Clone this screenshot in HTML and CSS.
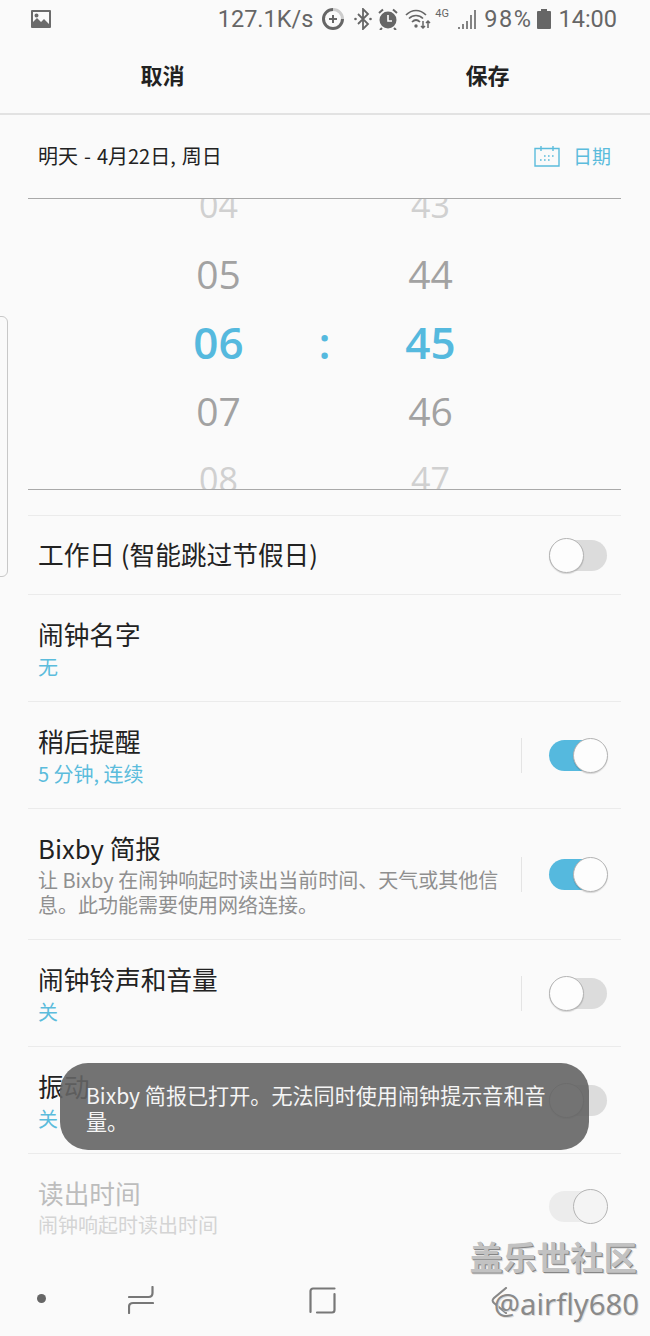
FILE: index.html

```html
<!DOCTYPE html>
<html lang="zh-CN">
<head>
    <meta charset="UTF-8">
    <title>闹钟</title>
    <link rel="stylesheet" href="styles.css">
</head>
<body>
<div class="screen">
    <div class="status">
        <svg class="ic-image" width="20" height="18" viewBox="0 0 20 18"><path fill="#6b6b6b" fill-rule="evenodd" d="M1 0h18a1 1 0 0 1 1 1v16a1 1 0 0 1-1 1H1a1 1 0 0 1-1-1V1a1 1 0 0 1 1-1zM2 2v10l4-4 4 4 3-3 5 5V2zM5.500 3.500a2 2 0 1 1 0 4 2 2 0 0 1 0-4z"/></svg>
        <div class="status-right">
            <span class="speed">127.1K/s</span>
            <svg class="ic-data" width="24" height="24" viewBox="0 0 24 24"><path fill="none" stroke="#ccc" stroke-width="3" d="M12 2.500a9.500 9.500 0 0 1 9.500 9.500"/><path fill="none" stroke="#666" stroke-width="3" d="M21.500 12A9.500 9.500 0 1 1 12 2.500"/><path fill="none" stroke="#666" stroke-width="2" d="M12 8v8M8 12h8"/></svg>
            <svg class="ic-bt" width="18" height="22" viewBox="0 0 18 22"><path fill="none" stroke="#666" stroke-width="1.800" d="M4 6l10 10-5 5V1l5 5L4 16"/><circle cx="1.500" cy="11" r="1.300" fill="#666"/><circle cx="16.500" cy="11" r="1.300" fill="#666"/></svg>
            <svg class="ic-alarm" width="20" height="22" viewBox="0 0 20 22"><circle cx="10" cy="12" r="8.500" fill="#666"/><path fill="none" stroke="#fff" stroke-width="1.600" d="M10 7v6h4"/><path fill="none" stroke="#666" stroke-width="2" d="M1 5l4-3.500M19 5l-4-3.500M4 20l-2 2M16 20l2 2"/></svg>
            <svg class="ic-wifi" width="26" height="22" viewBox="0 0 26 22"><path fill="none" stroke="#666" stroke-width="1.700" d="M1 7c6-6 14-6 20 0M4 10.500c4-4 10-4 14 0M7 14c2.500-2.500 5.500-2.500 8 0"/><circle cx="11" cy="18" r="1.700" fill="#666"/><path fill="none" stroke="#666" stroke-width="1.500" d="M18 13v7M16 18l2 2 2-2M23 20v-7M21 15l2-2 2 2"/></svg>
            <span class="net">4G</span>
            <svg class="ic-signal" width="20" height="20" viewBox="0 0 20 20"><path fill="none" stroke="#666" stroke-width="1.600" d="M1 20v-2M5 20v-5M9 20v-8M13 20V6M17 20V1"/></svg>
            <span class="batt-text">98%</span>
            <svg class="ic-batt" width="14" height="20" viewBox="0 0 14 20"><path fill="#666" d="M4 0h6v2h3a1 1 0 0 1 1 1v16a1 1 0 0 1-1 1H1a1 1 0 0 1-1-1V3a1 1 0 0 1 1-1h3z"/></svg>
            <span class="clock">14:00</span>
        </div>
    </div>

    <div class="actions">
        <div class="action">取消</div>
        <div class="action">保存</div>
    </div>

    <div class="wrap">
        <div class="date-row">
            <span class="date-text">明天 - 4月22日, 周日</span>
            <span class="date-btn">
                <svg width="26" height="22" viewBox="0 0 26 22"><path fill="none" stroke="#5bbcdc" stroke-width="1.400" d="M1 3.500h24v17.500H1zM7 1v5M19 1v5"/><path fill="none" stroke="#5bbcdc" stroke-width="1.600" stroke-dasharray="1.600 2.400" d="M10 11h10M6 15h12"/></svg>
                日期
            </span>
        </div>

        <div class="picker">
            <div class="picker-col">
                <div class="num fade">04</div>
                <div class="num">05</div>
                <div class="num now">06</div>
                <div class="num">07</div>
                <div class="num fade">08</div>
            </div>
            <div class="picker-col">
                <div class="num"></div>
                <div class="num"></div>
                <div class="num now">:</div>
            </div>
            <div class="picker-col">
                <div class="num fade">43</div>
                <div class="num">44</div>
                <div class="num now">45</div>
                <div class="num">46</div>
                <div class="num fade">47</div>
            </div>
        </div>

        <div class="list">
            <div class="row single">
                <div class="row-text"><div class="title">工作日 (智能跳过节假日)</div></div>
                <div class="switch"><div class="knob"></div></div>
            </div>
            <div class="row">
                <div class="row-text">
                    <div class="title">闹钟名字</div>
                    <div class="sub">无</div>
                </div>
            </div>
            <div class="row">
                <div class="row-text">
                    <div class="title">稍后提醒</div>
                    <div class="sub">5 分钟, 连续</div>
                </div>
                <div class="vline"></div>
                <div class="switch on"><div class="knob"></div></div>
            </div>
            <div class="row">
                <div class="row-text">
                    <div class="title">Bixby 简报</div>
                    <div class="desc">让 Bixby 在闹钟响起时读出当前时间、天气或其他信息。此功能需要使用网络连接。</div>
                </div>
                <div class="vline"></div>
                <div class="switch on"><div class="knob"></div></div>
            </div>
            <div class="row">
                <div class="row-text">
                    <div class="title">闹钟铃声和音量</div>
                    <div class="sub">关</div>
                </div>
                <div class="vline"></div>
                <div class="switch"><div class="knob"></div></div>
            </div>
            <div class="row">
                <div class="row-text">
                    <div class="title">振动</div>
                    <div class="sub">关</div>
                </div>
                <div class="switch"><div class="knob"></div></div>
            </div>
            <div class="row disabled">
                <div class="row-text">
                    <div class="title">读出时间</div>
                    <div class="desc">闹钟响起时读出时间</div>
                </div>
                <div class="switch on"><div class="knob"></div></div>
            </div>
        </div>
    </div>

    <div class="nav">
        <div class="nav-dot"></div>
        <svg class="nav-recent" width="26" height="28" viewBox="0 0 26 28"><path fill="none" stroke="#777" stroke-width="2.200" stroke-linecap="round" d="M24.500 1V7c0 2.500-1.500 4-4 4H1M25 17H5c-2.500 0-4 1.500-4 4v6"/></svg>
        <svg class="nav-home" width="27" height="27" viewBox="0 0 27 27"><path fill="none" stroke="#777" stroke-width="2.200" stroke-linecap="round" d="M25.500 1.500H4A2.500 2.500 0 0 0 1.500 4v21M8 25.500h15a2.500 2.500 0 0 0 2.500-2.500V7"/></svg>
        <svg class="nav-back" width="20" height="27" viewBox="0 0 20 27"><path fill="none" stroke="#888" stroke-width="2.200" stroke-linecap="round" d="M15 1L3 11c-2 2-2 3 0 5l12 10"/></svg>
    </div>

    <div class="edge"></div>
    <div class="toast">Bixby 简报已打开。无法同时使用闹钟提示音和音量。</div>
    <div class="mark">
        <div class="mark-top">盖乐世社区</div>
        <div class="mark-user">@airfly680</div>
    </div>
</div>
</body>
</html>
```

FILE: styles.css

```css
* { box-sizing: border-box; }
html, body { margin: 0; padding: 0; }
body { font-family: "Noto Sans CJK SC", "Noto Sans", sans-serif; background: #fafafa; color: #222; }
.screen { position: relative; width: 650px; height: 1336px; overflow: hidden; background: #fafafa; }

.status { height: 38px; padding: 0 33px 0 31px; display: flex; justify-content: space-between; align-items: center; color: #666; }
.ic-image { margin-bottom: 1px; }
.status-right { display: flex; align-items: center; font-family: Roboto, "Noto Sans", sans-serif; font-size: 23.500px; line-height: 38px; }
.ic-data { margin-left: 8px; }
.ic-bt { margin-left: 9px; }
.ic-alarm { margin-left: 6px; }
.ic-wifi { margin-left: 7px; }
.net { margin: -10px 0 0 4px; font-size: 11px; line-height: 14px; width: 17px; }
.ic-signal { margin-left: 6px; }
.batt-text { margin-left: 6px; letter-spacing: 1.500px; }
.ic-batt { margin-left: 5px; }
.clock { margin-left: 7px; }

.actions { height: 77px; display: flex; border-bottom: 2px solid #e2e2e2; }
.action { flex: 1; text-align: center; font-size: 22px; font-weight: 700; line-height: 72px; color: #222; }

.wrap { margin: 0 29px 0 28px; }
.date-row { height: 83px; padding: 0 10px 2px; display: flex; justify-content: space-between; align-items: center; }
.date-text { font-size: 20px; word-spacing: 1.500px; }
.date-btn { display: flex; align-items: center; gap: 13px; font-size: 19px; color: #5bbcdc; }

.picker { height: 292px; display: flex; justify-content: center; overflow: hidden; border-top: 1px solid #a9a9a9; border-bottom: 1px solid #a9a9a9; }
.picker-col { width: 106px; margin-top: -28px; }
.num { height: 68.500px; line-height: 68.500px; text-align: center; font-family: "Open Sans", sans-serif; font-size: 39px; color: #a2a2a2; }
.num.fade { color: #d0d0d0; font-size: 34px; }
.num.now { color: #55b9de; font-size: 44px; font-weight: 600; }

.list { margin-top: 25px; }
.row { display: flex; align-items: center; padding: 22px 14px 22px 10px; border-top: 1px solid #ebebeb; }
.row.single { padding: 21px 14px 23px 10px; }
.single .switch { margin-top: 2px; }
.row-text { flex: 1; }
.title { font-size: 25.700px; line-height: 34px; color: #222; }
.sub { margin-top: 4px; font-size: 20px; line-height: 24px; color: #5bbcdc; }
.desc { margin-top: 2px; font-size: 20px; line-height: 25px; color: #8f8f8f; width: 465px; }
.vline { width: 1px; height: 35px; margin-right: 27px; background: #e4e4e4; }

.switch { position: relative; flex: none; width: 58px; height: 31px; border-radius: 16px; background: #dcdcdc; }
.switch.on { background: #55b9de; }
.knob { position: absolute; left: 0; top: -2px; width: 35px; height: 35px; border-radius: 50%; background: #fdfdfd; border: 1px solid #b4b4b4; box-shadow: 0 1px 1px rgba(0, 0, 0, 0.15); }
.switch.on .knob { left: 24px; }

.disabled .title { color: #bdbdbd; }
.disabled .desc { color: #d4d4d4; }
.disabled .switch { background: #ececec; }
.disabled .knob { background: #f4f4f4; box-shadow: none; }

.nav { position: absolute; left: 0; right: 0; bottom: 0; height: 66px; padding: 0 0 6px 37px; display: flex; align-items: center; }
.nav-dot { width: 9px; height: 9px; border-radius: 50%; background: #666; margin-bottom: 4px; }
.nav-recent { margin-left: 82px; }
.nav-home { margin-left: 155px; }
.nav-back { margin-left: 155px; }

.edge { position: absolute; left: -8px; top: 316px; width: 16px; height: 261px; border: 1px solid #c8c8c8; border-radius: 6px; }
.toast { position: absolute; left: 60px; top: 1063px; width: 529px; height: 87px; padding: 19px 26px; border-radius: 28px; background: rgba(100, 100, 100, 0.9); color: #f5f5f5; font-size: 21.100px; line-height: 26px; }
.mark { position: absolute; right: 13px; top: 1234px; text-align: right; color: #c2c2c2; text-shadow: 1px 1px 0 #858585, 2px 2px 0 #dedede; }
.mark-top { font-size: 33.500px; font-weight: 700; line-height: 44px; }
.mark-user { margin: 6px -2px 0 0; font-family: "Noto Sans", sans-serif; font-size: 29.300px; line-height: 40px; color: #8a8a8a; text-shadow: 1px 1px 0 #ddd; }
```
